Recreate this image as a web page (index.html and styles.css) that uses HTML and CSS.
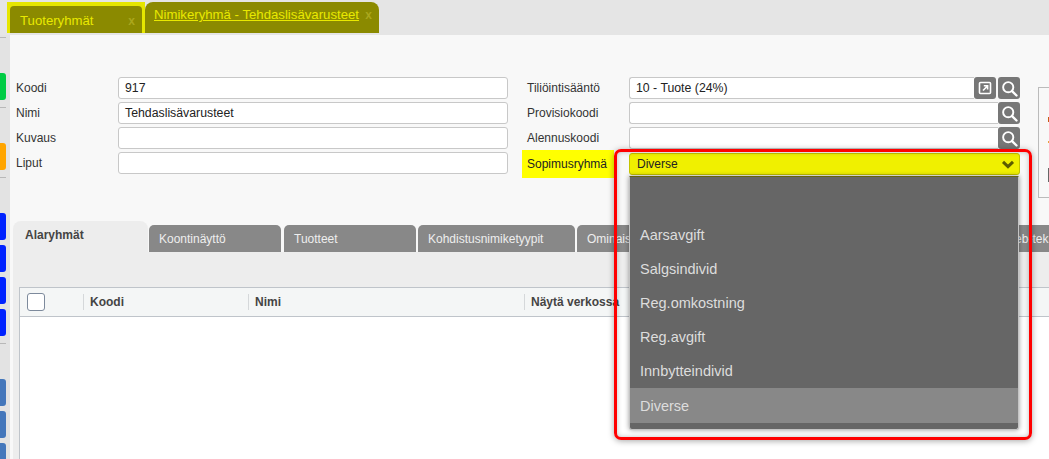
FILE: index.html
```html
<!DOCTYPE html>
<html lang="fi">
<head>
<meta charset="utf-8">
<title>Nimikeryhmä</title>
<link rel="stylesheet" href="styles.css">
</head>
<body>
<header class="tabbar">
  <div class="doc-frame"><div class="doc-tab"><span class="doc-title">Tuoteryhmät</span><span class="doc-x">x</span></div></div>
  <div class="doc-tab doc-active"><span class="doc-title">Nimikeryhmä - Tehdaslisävarusteet</span><span class="doc-x">x</span></div>
</header>
<div class="shell">
  <nav class="rail">
    <div class="rail-group"><i class="pill green"></i></div>
    <div class="rail-group"><i class="pill orange"></i></div>
    <div class="rail-group"><i class="pill blue"></i><i class="pill blue"></i><i class="pill blue"></i><i class="pill blue"></i></div>
    <div class="rail-group"><i class="pill steel"></i><i class="pill steel"></i><i class="pill steel"></i></div>
  </nav>
  <main class="main">
    <section class="form">
      <div class="col left-col">
        <div class="row"><label>Koodi</label><div class="input">917</div></div>
        <div class="row"><label>Nimi</label><div class="input">Tehdaslisävarusteet</div></div>
        <div class="row"><label>Kuvaus</label><div class="input"></div></div>
        <div class="row"><label>Liput</label><div class="input"></div></div>
      </div>
      <div class="col right-col">
        <div class="row"><label>Tiliöintisääntö</label><div class="input joined">10 - Tuote (24%)</div>
          <button class="icon-btn open"><svg width="14" height="14" viewBox="0 0 14 14"><rect x="1.5" y="1.5" width="11" height="11" rx="1" fill="none" stroke="#fff" stroke-width="1.6"/><path d="M5 9.5 9.2 5.2M5.8 4.8h3.8v3.8" fill="none" stroke="#fff" stroke-width="1.6"/></svg></button>
          <button class="icon-btn"><svg width="17" height="17" viewBox="0 0 16 16"><circle cx="6.8" cy="6.8" r="4.8" fill="none" stroke="#fff" stroke-width="1.8"/><path d="m10.4 10.4 4.2 4.2" stroke="#fff" stroke-width="2.2" stroke-linecap="round"/></svg></button></div>
        <div class="row"><label>Provisiokoodi</label><div class="input joined"></div>
          <button class="icon-btn"><svg width="17" height="17" viewBox="0 0 16 16"><circle cx="6.8" cy="6.8" r="4.8" fill="none" stroke="#fff" stroke-width="1.8"/><path d="m10.4 10.4 4.2 4.2" stroke="#fff" stroke-width="2.2" stroke-linecap="round"/></svg></button></div>
        <div class="row"><label>Alennuskoodi</label><div class="input joined"></div>
          <button class="icon-btn"><svg width="17" height="17" viewBox="0 0 16 16"><circle cx="6.8" cy="6.8" r="4.8" fill="none" stroke="#fff" stroke-width="1.8"/><path d="m10.4 10.4 4.2 4.2" stroke="#fff" stroke-width="2.2" stroke-linecap="round"/></svg></button></div>
        <div class="row hl"><label>Sopimusryhmä</label>
          <div class="select">Diverse<svg class="chev" width="14" height="9" viewBox="0 0 14 9"><path d="M2 1.8 7 6.6l5-4.8" fill="none" stroke="#5c5c00" stroke-width="3"/></svg></div></div>
      </div>
      <div class="side-box"><i class="m1"></i><i class="m2"></i><i class="m3"></i></div>
    </section>
    <section class="panel-wrap">
      <div class="subtabs">
        <div class="subtab active">Alaryhmät</div>
        <div class="subtab w1">Koontinäyttö</div>
        <div class="subtab w2">Tuotteet</div>
        <div class="subtab w3">Kohdistusnimiketyypit</div>
        <div class="subtab w4">Ominaisuudet</div>
        <div class="subtab w5">Web-tek</div>
      </div>
      <div class="panel">
        <div class="table">
          <div class="thead">
            <div class="th th-check"><span class="check"></span></div>
            <div class="th th-code">Koodi</div>
            <div class="th th-name">Nimi</div>
            <div class="th">Näytä verkossa</div>
          </div>
        </div>
      </div>
    </section>
  </main>
</div>
<div class="dropdown">
  <div class="opt empty"></div>
  <div class="opt">Aarsavgift</div>
  <div class="opt">Salgsindivid</div>
  <div class="opt">Reg.omkostning</div>
  <div class="opt">Reg.avgift</div>
  <div class="opt">Innbytteindivid</div>
  <div class="opt current">Diverse</div>
</div>
<div class="callout"></div>
</body>
</html>
```
FILE: styles.css
```css
* { box-sizing: border-box; }
html, body { margin: 0; height: 100%; overflow: hidden; }
body { width: 1049px; height: 459px; background: #f8f8f8; font-family: "Liberation Sans", Arial, sans-serif; font-size: 12px; color: #333; position: relative; }
.tabbar { height: 35px; background: #e5e5e5; display: flex; align-items: flex-end; padding: 0 0 2px 7px; }
.doc-frame { width: 138px; height: 31px; background: #e6e600; padding: 4px 3px 0; flex: none; }
.doc-tab { height: 100%; background: #8b8a00; border-radius: 4px 4px 0 0; display: flex; align-items: center; justify-content: space-between; padding: 2px 7px 0 10px; color: #e9e900; }
.doc-title { font-size: 13.2px; white-space: nowrap; }
.doc-x { color: #aaa71c; font-weight: bold; font-size: 12px; }
.doc-active { height: 31px; width: 234px; flex: none; border-radius: 8px 8px 0 0; padding: 0 7px 6px 9px; }
.doc-active .doc-title { text-decoration: underline; }
.shell { display: flex; height: 424px; }
.rail { width: 10px; background: #e3e3e3; flex: none; padding-top: 2px; overflow: hidden; }
.rail-group { width: 6px; min-height: 70px; border-top: 1px solid #b8b8b8; padding: 35px 0 7px; display: flex; flex-direction: column; gap: 5px; }
.pill { display: block; flex: none; width: 6px; height: 27px; border-radius: 0 3px 3px 0; }
.green { background: #00cc44; }
.orange { background: #ffa500; }
.blue { background: #0022ff; }
.steel { background: #4477bb; }
.main { flex: 1; min-width: 0; display: flex; flex-direction: column; overflow: hidden; }
.form { display: flex; padding: 42px 0 0 6px; height: 186px; position: relative; }
.col { display: flex; flex-direction: column; gap: 3px; }
.left-col { width: 492px; }
.right-col { width: 493px; margin-left: 19px; }
.row { display: flex; align-items: center; height: 22px; }
label { color: #333; font-size: 12px; flex: none; width: 102px; }
.input { flex: 1; height: 22px; background: #fff; border: 1px solid #c8c8c8; border-radius: 3px; padding: 0 6px; line-height: 20px; color: #222; font-size: 12.3px; }
.icon-btn { width: 22px; height: 22px; flex: none; border: 0; padding: 0; background: #777; border-radius: 3px; display: flex; align-items: center; justify-content: center; }
.input.joined { border-radius: 3px 0 0 3px; border-right: 0; }
.open { margin-right: 2px; }
.hl { margin-top: 1px; }
.hl label { background: #ffff00; height: 28px; line-height: 28px; width: 92px; margin: 0 15px 0 -5px; padding-left: 5px; color: #222; }
.select { flex: 1; height: 22px; background: #f0f000; border: 1px solid #c4c400; border-radius: 3px; line-height: 20px; padding: 0 4px 0 7px; color: #222; display: flex; align-items: center; justify-content: space-between; }
.side-box { position: absolute; left: 1028px; top: 52px; width: 30px; height: 111px; border: 1px solid #bbb; }
.side-box i { position: absolute; left: 9px; display: block; width: 2px; }
.m1 { top: 29px; height: 5px; background: #c85a17; }
.m2 { top: 53px; height: 2px; background: #e8a33c; }
.m3 { top: 80px; height: 14px; background: #666; }
.panel-wrap { flex: 1; padding-left: 3px; display: flex; flex-direction: column; min-height: 0; }
.subtabs { display: flex; align-items: flex-end; height: 31px; flex: none; }
.subtab { height: 27px; background: #888; color: #eee; border-radius: 5px 5px 0 0; margin-right: 2px; padding-left: 10px; line-height: 29px; font-size: 12px; flex: none; white-space: nowrap; }
.subtab.active { height: 31px; width: 135px; background: #ededed; color: #444; font-weight: bold; border-radius: 8px 8px 0 0; margin-right: 1px; padding-left: 12px; line-height: 29px; }
.w1 { width: 132px; margin-right: 3px; }
.w2 { width: 132px; }
.w3 { width: 157px; }
.w4 { width: 420px; }
.w5 { width: 60px; padding-left: 5px; }
.panel { flex: 1; background: #ededed; padding: 35px 0 0 6px; display: flex; min-height: 0; }
.table { flex: 1; background: #fff; border: 1px solid #bfc4ca; border-right: 0; border-bottom: 0; }
.thead { height: 29px; background: #f4f6f6; border-bottom: 1px solid #bfc4ca; display: flex; align-items: center; font-weight: bold; color: #444; }
.th { height: 16px; line-height: 16px; border-left: 1px solid #d5d8da; padding-left: 6px; }
.th-check { width: 63px; border: 0; padding: 0 0 0 7px; display: flex; align-items: center; flex: none; }
.check { width: 18px; height: 18px; background: #fff; border: 1px solid #7d8a9c; border-radius: 3px; }
.th-code { width: 165px; flex: none; }
.th-name { width: 276px; flex: none; }
.dropdown { position: absolute; left: 629px; top: 176px; width: 390px; height: 254px; background: #666; border: 1px solid #c4c4c4; border-top: 1px solid #66640e; border-radius: 0 0 3px 3px; box-shadow: 0 0 5px rgba(0,0,0,.4); }
.opt { height: 34px; line-height: 34px; padding-left: 10px; color: #ddd; font-size: 14.5px; }
.opt.empty { height: 41px; }
.opt.current { background: #888; height: 35px; line-height: 36px; }
.callout { position: absolute; left: 614px; top: 149px; width: 418px; height: 291px; border: 3px solid #f00; border-radius: 7px; box-shadow: 0 1px 6px rgba(0,0,0,.35), inset 0 0 5px rgba(0,0,0,.25); pointer-events: none; }
```
